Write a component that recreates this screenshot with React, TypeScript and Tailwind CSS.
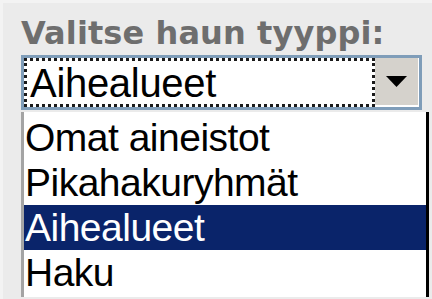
import React from "react";

export default function App() {
  const items = ["Omat aineistot", "Pikahakuryhmät", "Aihealueet", "Haku"];
  return (
    <div className="w-[432px] h-[299px] overflow-hidden bg-[#ebebeb] border-l-[3px] border-t-[3px] border-[#f3f3f3] pl-[18px] pt-[14px]">
      <div
        className="h-[32px] leading-[32px] text-[32px] font-bold text-[#6e6e6e] mb-[6px] whitespace-nowrap tracking-[0.1px]"
        style={{ fontFamily: '"DejaVu Sans", Verdana, sans-serif' }}
      >
        Valitse haun tyyppi:
      </div>
      <div className="w-[401px] h-[55px] border-[3px] border-[#7f9db9] bg-white flex">
        <div className="flex-1 border-[3px] border-dotted border-[#1a1a1a] flex items-center pl-[3px]">
          <span
            className="text-[40px] tracking-[-0.3px] leading-none text-black"
            style={{ fontFamily: '"Liberation Sans", Arial, sans-serif' }}
          >
            Aihealueet
          </span>
        </div>
        <div className="w-[43px] h-[47px] mr-[1px] bg-[#d5d2cc] flex items-center justify-center">
          <svg width="21" height="11" viewBox="0 0 21 11">
            <polygon points="0,0 21,0 10.5,11" fill="#000" />
          </svg>
        </div>
      </div>
      <div className="w-[408px] mt-[2px] bg-white border-l-[3px] border-[#a4a4a4] border-r-[3px] border-r-black pt-[3px] pb-[2px]">
        {items.map((it, i) => (
          <div
            key={it}
            className={
              "h-[45px] leading-[45px] pl-[1px] text-[39px] tracking-[-0.5px] whitespace-nowrap " +
              (i === 2 ? "bg-[#0a246a] text-white" : "text-black")
            }
            style={{ fontFamily: '"Liberation Sans", Arial, sans-serif' }}
          >
            {it}
          </div>
        ))}
      </div>
    </div>
  );
}
